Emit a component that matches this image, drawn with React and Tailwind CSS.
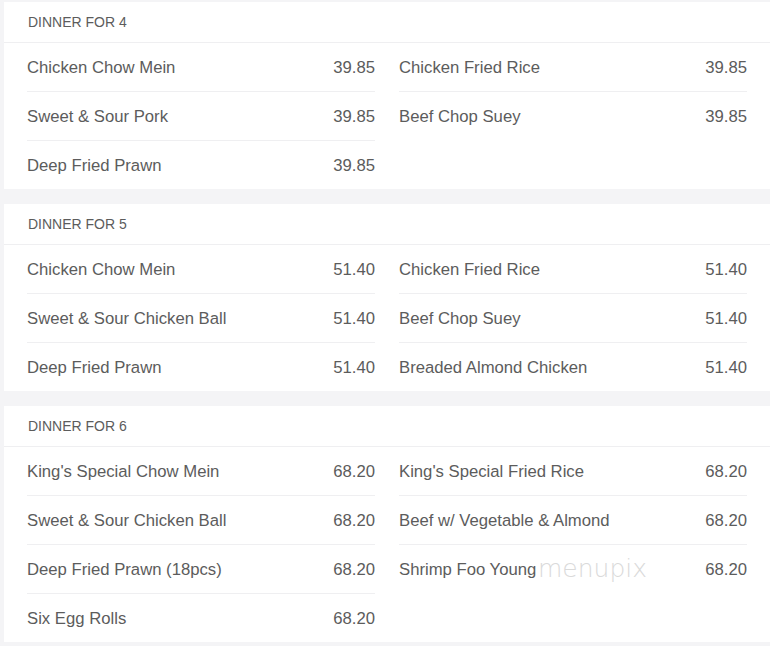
const SECTIONS = [
  {
    title: 'DINNER FOR 4',
    left: [
      ['Chicken Chow Mein', '39.85'],
      ['Sweet & Sour Pork', '39.85'],
      ['Deep Fried Prawn', '39.85'],
    ],
    right: [
      ['Chicken Fried Rice', '39.85'],
      ['Beef Chop Suey', '39.85'],
    ],
  },
  {
    title: 'DINNER FOR 5',
    left: [
      ['Chicken Chow Mein', '51.40'],
      ['Sweet & Sour Chicken Ball', '51.40'],
      ['Deep Fried Prawn', '51.40'],
    ],
    right: [
      ['Chicken Fried Rice', '51.40'],
      ['Beef Chop Suey', '51.40'],
      ['Breaded Almond Chicken', '51.40'],
    ],
  },
  {
    title: 'DINNER FOR 6',
    left: [
      ["King's Special Chow Mein", '68.20'],
      ['Sweet & Sour Chicken Ball', '68.20'],
      ['Deep Fried Prawn (18pcs)', '68.20'],
      ['Six Egg Rolls', '68.20'],
    ],
    right: [
      ["King's Special Fried Rice", '68.20'],
      ['Beef w/ Vegetable & Almond', '68.20'],
      ['Shrimp Foo Young', '68.20'],
    ],
  },
];

function Column({ items }) {
  return (
    <div className="flex flex-col divide-y divide-[#efeff1]">
      {items.map(([name, price]) => (
        <div key={name} className="flex h-[46px] box-content items-center justify-between pt-[2px]">
          <span>{name}</span>
          <span>{price}</span>
        </div>
      ))}
    </div>
  );
}

function Section({ section }) {
  return (
    <div className="bg-white">
      <div className="flex h-[41px] items-center border-b border-[#efeff1] px-[24px] text-[14px] text-[#5c5c5c]">
        {section.title}
      </div>
      <div className="grid grid-cols-2 gap-x-[24px] px-[23px] text-[16.7px] text-[#5c5c5c]">
        <Column items={section.left} />
        <Column items={section.right} />
      </div>
    </div>
  );
}

export default function App() {
  return (
    <div
      className="relative flex h-[646px] w-[770px] flex-col gap-[15px] overflow-hidden bg-[#f4f4f6] pl-[4px] pt-[2px]"
      style={{ fontFamily: '"Liberation Sans", Arial, sans-serif' }}
    >
      {SECTIONS.map(s => (
        <Section key={s.title} section={s} />
      ))}
      {/* watermark */}
      <span
        className="pointer-events-none absolute left-[538px] top-[550px] text-[25px] font-extralight text-[#dadada]"
        style={{ fontFamily: '"DejaVu Sans", sans-serif' }}
      >
        menupix
      </span>
    </div>
  );
}
